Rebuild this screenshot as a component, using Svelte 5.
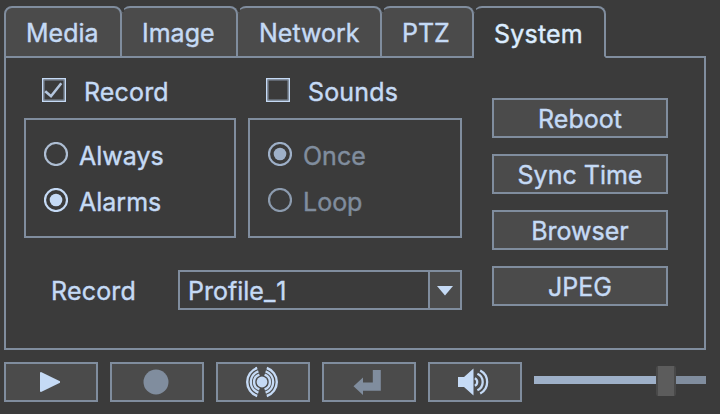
<script>
  let active = $state('System');
  let record = $state(true);
  let sounds = $state(false);
  let recordMode = $state('Alarms');
  let soundMode = $state('Once');
  let volume = $state(71);
  const tabs = [
    { name: 'Media', cls: 'media' },
    { name: 'Image', cls: 'image' },
    { name: 'Network', cls: 'network' },
    { name: 'PTZ', cls: 'ptz' },
    { name: 'System', cls: 'system' }
  ];
  const actions = ['Reboot', 'Sync Time', 'Browser', 'JPEG'];
</script>

{#snippet check(label, on, toggle)}
  <button class="check" role="checkbox" aria-checked={on} onclick={toggle}>
    <svg width="24" height="24" viewBox="0 0 24 24">
      <rect x="0.75" y="0.75" width="22.5" height="22.5" fill="none" stroke="#c5daf5" stroke-width="1.5" />
      <rect x="2" y="2" width="20" height="20" fill="none" stroke="#8592a3" />
      {#if on}<path d="M3.2 13.2 9 18.2 19.3 5.2" fill="none" stroke="#b3c5dd" stroke-width="2.6" />{/if}
    </svg>
    <span>{label}</span>
  </button>
{/snippet}

{#snippet radio(label, on, pick)}
  <button class="radio" role="radio" aria-checked={on} onclick={pick}>
    <svg width="24" height="24" viewBox="0 0 24 24">
      <circle cx="12" cy="12" r="11" fill="none" stroke="currentColor" stroke-width="2.2" />
      {#if on}<circle cx="12" cy="12" r="6.3" fill="currentColor" />{/if}
    </svg>
    <span>{label}</span>
  </button>
{/snippet}

<main>
  <nav>
    {#each tabs as tab}
      <button class="tab {tab.cls}" class:active={active === tab.name} onclick={() => (active = tab.name)}>
        <span>{tab.name}</span>
      </button>
    {/each}
    <i class="rest"></i>
  </nav>

  <section class="panel">
    <div class="settings">
      <div class="groups">
        <div class="column first">
          {@render check('Record', record, () => (record = !record))}
          <div class="group">
            {#each ['Always', 'Alarms'] as mode}
              {@render radio(mode, recordMode === mode, () => (recordMode = mode))}
            {/each}
          </div>
        </div>
        <div class="column second">
          {@render check('Sounds', sounds, () => (sounds = !sounds))}
          <div class="group" class:disabled={!sounds}>
            {#each ['Once', 'Loop'] as mode}
              {@render radio(mode, soundMode === mode, () => (soundMode = mode))}
            {/each}
          </div>
        </div>
      </div>
      <div class="profile">
        <span class="label">Record</span>
        <div class="combo">
          <span>Profile<span class="suffix">_1</span></span>
          <button class="arrow" aria-label="Open">
            <svg width="16" height="10" viewBox="0 0 16 10"><path d="M0 0h16L8 9.4z" fill="#c5daf5" /></svg>
          </button>
        </div>
      </div>
    </div>
    <div class="actions">
      {#each actions as action}
        <button><span>{action}</span></button>
      {/each}
    </div>
  </section>

  <footer>
    <button aria-label="Play">
      <svg viewBox="0 0 90 36"><path d="M34 8.5 35 8 54 17.2V18.8L35 28 34 27.5z" fill="#c5daf5" /></svg>
    </button>
    <button aria-label="Record">
      <svg viewBox="0 0 90 36"><circle cx="44" cy="18" r="12.5" fill="#808d9e" /></svg>
    </button>
    <button aria-label="Broadcast">
      <svg viewBox="0 0 90 36">
        <circle cx="44" cy="18" r="5.4" fill="#c5daf5" />
        <g fill="none" stroke="#c5daf5" stroke-width="2.4">
          <path d="M41.4 10.6A7.8 7.8 0 0 0 41.4 25.4M46.6 10.6A7.8 7.8 0 0 1 46.6 25.4" />
          <path d="M40.4 7.4A11.2 11.2 0 0 0 40.4 28.6M47.6 7.4A11.2 11.2 0 0 1 47.6 28.6" />
          <path d="M39.2 4A14.8 14.8 0 0 0 39.2 32M48.8 4A14.8 14.8 0 0 1 48.8 32" />
        </g>
      </svg>
    </button>
    <button aria-label="Enter">
      <svg viewBox="0 0 90 36"><path d="M48.8 6h8v20.7H39v4.3L29.5 22.3 39 13.6v5h9.8z" fill="#808d9e" /></svg>
    </button>
    <button aria-label="Sound">
      <svg viewBox="0 0 90 36">
        <path d="M28 13h6L43.5 4.5V31.5L34 23h-6z" fill="#c5daf5" />
        <g fill="none" stroke="#c5daf5" stroke-width="2.3">
          <path d="M44.8 14.2A4.2 4.2 0 0 1 44.8 21.8" />
          <path d="M47.4 9.8A9 9 0 0 1 47.4 26.2" />
          <path d="M50.2 6.5A13 13 0 0 1 50.2 29.5" />
        </g>
      </svg>
    </button>
    <div class="slider" role="slider" tabindex="0" aria-label="Volume" aria-valuenow={volume}>
      <i class="filled" style="width: {volume}%"></i>
      <i class="handle"></i>
      <i class="empty"></i>
    </div>
  </footer>
</main>

<style>
  :global(body) { background: #3b3b3b; }
  main {
    box-sizing: border-box;
    width: 720px;
    height: 414px;
    padding: 6px 14px 0 4px;
    background: #3b3b3b;
    color: #c5daf5;
    font: 400 25px/30px Inter, "Liberation Sans", sans-serif;
    -webkit-text-stroke: 0.4px currentColor;
    white-space: nowrap;
    overflow: hidden;
  }
  button {
    box-sizing: border-box;
    margin: 0;
    padding: 0;
    border: 2px solid #808d9e;
    border-radius: 0;
    background: #4b4b4b;
    color: inherit;
    font: inherit;
    letter-spacing: inherit;
    outline: none;
  }
  svg { display: block; flex: none; }
  nav { display: flex; height: 52px; }
  .tab {
    position: relative;
    flex: none;
    border-left: 0;
    border-radius: 8px 8px 0 0;
    text-align: left;
    padding: 2px 0 0 20px;
  }
  .tab + .tab::before {
    content: "";
    position: absolute;
    left: 0;
    top: -2px;
    width: 2px;
    height: 6px;
    background: #3b3b3b;
  }
  .tab.media { width: 118px; border-left: 2px solid #808d9e; }
  .tab.image { width: 116px; }
  .tab.network { width: 144px; padding-left: 21px; }
  .tab.ptz { width: 92px; }
  .tab.system { width: 132px; letter-spacing: 0.2px; }
  .tab.active { background: #3b3b3b; border-bottom-color: transparent; color: #dcedff; padding-top: 4px; }
  .rest { flex: 1; align-self: flex-end; height: 2px; background: #808d9e; }
  .panel {
    box-sizing: border-box;
    display: flex;
    gap: 30px;
    height: 292px;
    border: 2px solid #808d9e;
    border-top: 0;
    padding-left: 18px;
  }
  .settings { width: 438px; }
  .groups { display: flex; gap: 12px; padding-top: 20px; }
  .first { width: 212px; }
  .second { width: 214px; }
  .check, .radio { display: flex; align-items: center; border: 0; background: none; height: 24px; }
  .check { gap: 18px; margin-left: 18px; letter-spacing: 0.15px; }
  .check span { position: relative; top: 2px; }
  .group {
    box-sizing: border-box;
    height: 120px;
    margin-top: 16px;
    padding: 22px 0 0 18px;
    border: 2px solid #808d9e;
  }
  .radio { gap: 11px; color: #aebed3; margin-bottom: 22px; }
  .radio[aria-checked="true"] { color: #c5daf5; }
  .radio span { color: #c5daf5; position: relative; top: 2px; }
  .disabled .radio { color: #8c9bae; }
  .disabled .radio[aria-checked="true"] { color: #9eb0c8; }
  .disabled .radio span { color: #808d9e; }
  .profile { display: flex; align-items: center; height: 40px; margin-top: 32px; }
  .label { width: 127px; padding-left: 27px; position: relative; top: 1px; letter-spacing: 0.2px; }
  .combo {
    box-sizing: border-box;
    display: flex;
    justify-content: space-between;
    width: 284px;
    height: 40px;
    border: 2px solid #808d9e;
    padding-left: 8px;
    line-height: 38px;
  }
  .suffix { font-kerning: none; font-feature-settings: "calt" 0; letter-spacing: 1px; }
  .arrow { display: flex; align-items: center; justify-content: center; width: 32px; border-width: 0 0 0 2px; }
  .arrow svg { position: relative; top: 1px; }
  .actions { display: flex; flex-direction: column; gap: 16px; width: 176px; padding-top: 40px; }
  .actions button { height: 40px; }
  .actions span { position: relative; top: 1px; }
  footer { display: flex; gap: 12px; margin-top: 12px; }
  footer button { width: 94px; height: 40px; }
  footer svg { width: 90px; height: 36px; }
  .slider { display: flex; align-items: center; width: 172px; height: 30px; margin-top: 3px; }
  .filled { height: 8px; background: #9eb0c8; }
  .handle {
    box-sizing: border-box;
    position: relative;
    top: 1px;
    flex: none;
    width: 20px;
    height: 30px;
    border: solid #494949;
    border-width: 0 2px;
    border-radius: 2px;
    background: #5c5c5c;
  }
  .empty { flex: 1; height: 8px; background: #808d9e; }
</style>
